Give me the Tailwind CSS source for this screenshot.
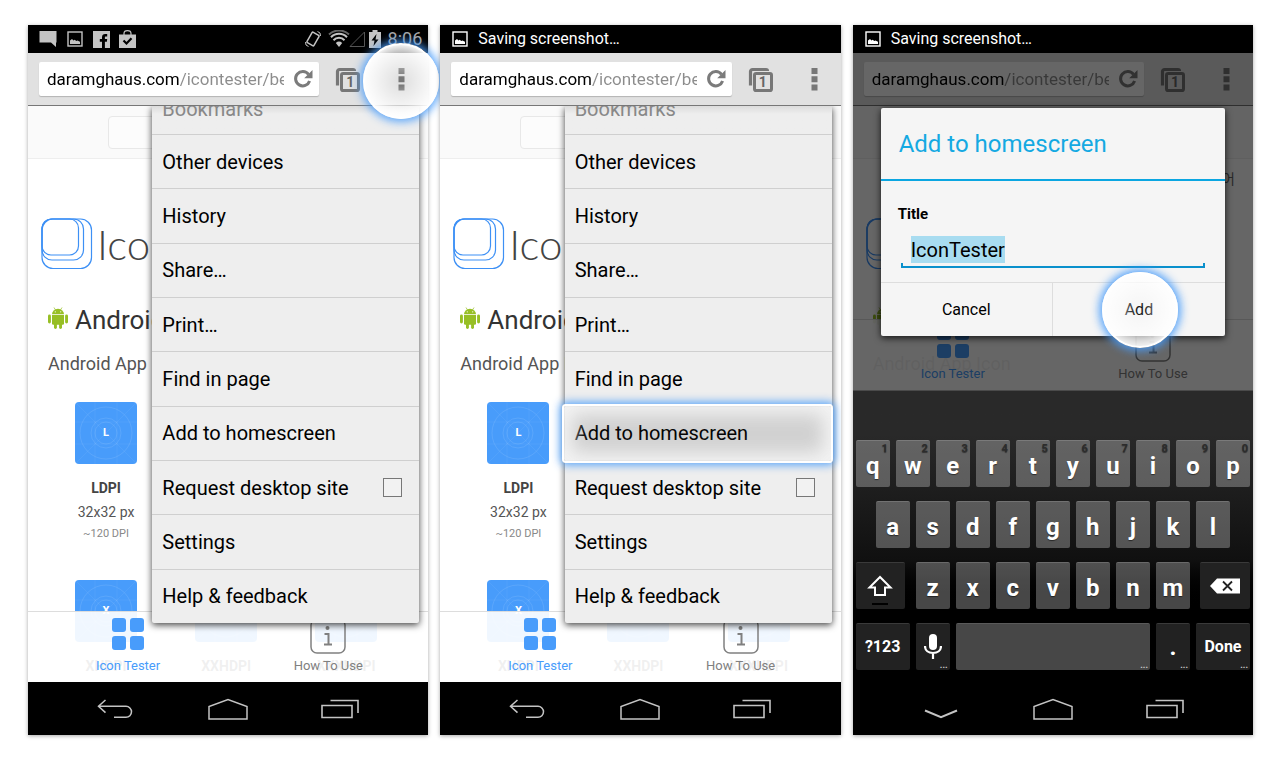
<!DOCTYPE html>
<html lang="en">
<head>
<meta charset="utf-8">
<meta name="viewport" content="width=device-width, initial-scale=1">
<title>Add IconTester to the homescreen</title>
<script src="https://cdn.jsdelivr.net/npm/@tailwindcss/browser@4"></script>
</head>
<body class="bg-white font-['Roboto','Noto_Sans_CJK_KR',sans-serif] text-black">

<svg class="hidden" aria-hidden="true">
  <symbol id="i-picture" viewBox="0 0 16 16"><rect x="1" y="1" width="14" height="14" fill="none" stroke="currentColor" stroke-width="1.4"/><path fill="currentColor" d="M3 13V9.500l2-1.500 1.500 1.500 1.200-.8 1.600 1.300 1.200-.6L13 10.800V13z"/></symbol>
  <symbol id="i-reload" viewBox="0 0 20 20"><path d="M15.500 5.300A7.200 7.200 0 1 0 16.600 12" fill="none" stroke="currentColor" stroke-width="3"/><path d="M19.500 1v8.300h-8.300z" fill="currentColor"/></symbol>
  <symbol id="i-tabs" viewBox="0 0 25 25"><path d="M2.500 18.500V4.500a2 2 0 0 1 2-2H18a1.500 1.500 0 0 1 1.500 1.500" fill="none" stroke="currentColor" stroke-width="3.200"/><rect x="6.500" y="6.500" width="17" height="17" rx="1.600" fill="none" stroke="currentColor" stroke-width="3"/></symbol>
  <symbol id="i-dots" viewBox="0 0 7 24"><path d="M.5 1h6v6h-6zM.5 9.300h6v6h-6zM.5 17.500h6v6h-6z" fill="currentColor"/></symbol>
  <symbol id="i-logo" viewBox="0 0 52 52"><g fill="none" stroke="#3d90f5" stroke-width="1.200"><rect x="1" y="1" width="49.500" height="49.500" rx="11"/><rect x="1" y="1" width="41.500" height="41" rx="10"/><rect x="1" y="1" width="36.500" height="36" rx="9"/></g></symbol>
  <symbol id="i-android" viewBox="0 0 20 22"><g fill="#97bf25"><path d="M4 7.200a6 5.400 0 0 1 12 0z"/><rect x="0" y="7.600" width="2.900" height="8.800" rx="1.450"/><rect x="17.100" y="7.600" width="2.900" height="8.800" rx="1.450"/><path d="M4 8h12v8.500a1.300 1.300 0 0 1-1.300 1.300H5.300A1.300 1.300 0 0 1 4 16.500z"/><rect x="6" y="14" width="2.900" height="8" rx="1.450"/><rect x="11.100" y="14" width="2.900" height="8" rx="1.450"/><path d="M6 .5l1.500 2.500M14 .5l-1.500 2.500" stroke="#97bf25" stroke-width=".7"/></g><circle cx="7.300" cy="4.800" r=".6" fill="#fff"/><circle cx="12.700" cy="4.800" r=".6" fill="#fff"/></symbol>
  <symbol id="i-tile" viewBox="0 0 62 62"><rect width="62" height="62" rx="4" fill="#489cfb"/><g fill="none" stroke="#fff" stroke-opacity=".1"><circle cx="31" cy="31" r="26"/><circle cx="31" cy="31" r="15"/><circle cx="31" cy="31" r="11"/><path stroke-opacity=".05" d="M0 0l62 62M62 0L0 62M20 0v62M42 0v62M0 20h62M0 42h62"/></g></symbol>
  <symbol id="i-grid" viewBox="0 0 32 32"><g fill="currentColor"><rect x="0" y="0" width="14" height="14" rx="3"/><rect x="18" y="0" width="14" height="14" rx="3"/><rect x="0" y="18" width="14" height="14" rx="3"/><rect x="18" y="18" width="14" height="14" rx="3"/></g></symbol>
  <symbol id="i-info" viewBox="0 0 36 36"><rect x="1" y="1" width="34" height="34" rx="6" fill="none" stroke="currentColor" stroke-width="1.500"/><circle cx="17.500" cy="10" r="2" fill="currentColor"/><path d="M14.500 16h4v10M14 26.500h8" fill="none" stroke="currentColor" stroke-width="2"/></symbol>
  <symbol id="i-back" viewBox="0 0 38 20"><path d="M8.500 1L1.500 7.300l7 6.300M2 7.300h27a5.500 5.500 0 0 1 0 11H17" fill="none" stroke="currentColor" stroke-width="1.500"/></symbol>
  <symbol id="i-down" viewBox="0 0 38 20"><path d="M3 11.500l16 6.700 16-6.700" fill="none" stroke="currentColor" stroke-width="2"/></symbol>
  <symbol id="i-home" viewBox="0 0 40 22"><path d="M1 21V8.500L20 1.500l19 7V21z" fill="none" stroke="currentColor" stroke-width="1.500"/></symbol>
  <symbol id="i-recent" viewBox="0 0 38 20"><path d="M1 6.500h30v12H1zM9.500 1.500H37V14" fill="none" stroke="currentColor" stroke-width="1.600"/></symbol>
</svg>

<template id="t-toolbar">
  <div class="flex h-[53px] shrink-0 items-center border-b border-[#777] bg-[#e1e1e1] pr-[23px] pl-[11px] text-[#7b7b7b]">
    <div class="flex h-[34px] flex-1 items-center rounded-xs bg-white pr-[6px] pl-2 shadow-[0_1px_1px_rgba(0,0,0,0.2)]">
      <input type="text" aria-label="Address" value="daramghaus.com/icontester/beta" class="min-w-0 flex-1 bg-linear-to-r from-black from-[132px] to-[#8c8c8c] to-[132px] bg-clip-text text-[17px] leading-6 text-transparent outline-none">
      <button type="button" aria-label="Reload" class="ml-[9px]"><svg class="size-5"><use href="#i-reload"/></svg></button>
    </div>
    <button type="button" aria-label="Tabs" class="relative ml-4 size-[25px] text-[#777]"><svg class="size-[25px]"><use href="#i-tabs"/></svg><span class="absolute inset-0 pt-1 pl-[5px] text-center text-sm leading-[22px] font-bold text-[#666]">1</span></button>
    <button type="button" aria-label="More options" class="ml-[38px] text-[#777]"><svg class="h-6 w-[7px]"><use href="#i-dots"/></svg></button>
  </div>
</template>

<template id="t-page">
  <div class="flex flex-col">
    <div class="h-[53px] border-b border-[#eee] bg-[#fafafa] pt-[10px] pl-20"><div class="h-[33px] w-60 rounded-sm border border-[#e8e8e8] bg-white/40"></div></div>
    <p class="pt-3 pr-[18px] text-right text-sm leading-4 text-[#666]">한국어</p>
    <div class="mt-[31px] flex items-center pl-[13px]">
      <svg class="size-[52px]"><use href="#i-logo"/></svg>
      <span class="pl-1 font-[Lato] text-[42px] leading-[44px] font-light text-[#444]">Icon</span>
    </div>
    <h2 class="mt-[34px] flex h-8 items-center gap-[7px] pl-5 text-[26px] leading-8 text-[#333]"><svg class="mb-1 h-[22px] w-5"><use href="#i-android"/></svg>Android</h2>
    <p class="mt-[14px] pl-5 text-lg leading-7 text-[#555]">Android App Icon</p>
    <div class="mt-6 grid grid-cols-3 gap-y-[36px] pr-[22px] pl-[18px] text-center">
      <div class="flex flex-col items-center"><span class="relative size-[62px]"><svg class="size-[62px]"><use href="#i-tile"/></svg><b class="absolute inset-0 text-[11px] leading-[62px] text-white">L</b></span><b class="mt-3 text-sm leading-6 text-[#444]">LDPI</b><span class="text-sm leading-6 text-[#555]">32x32 px</span><span class="text-[11px] leading-5 text-[#888]">~120 DPI</span></div>
      <div></div><div></div>
      <div class="flex flex-col items-center"><span class="relative size-[62px]"><svg class="size-[62px]"><use href="#i-tile"/></svg><b class="absolute inset-0 text-[11px] leading-[62px] text-white">X</b></span><b class="mt-3 text-sm leading-6 text-[#444]">XHDPI</b></div>
      <div class="flex flex-col items-center"><svg class="size-[62px]"><use href="#i-tile"/></svg><b class="mt-3 text-sm leading-6 text-[#444]">XXHDPI</b></div>
      <div class="flex flex-col items-center"><svg class="size-[62px]"><use href="#i-tile"/></svg><b class="mt-3 text-sm leading-6 text-[#444]">XXXHDPI</b></div>
    </div>
  </div>
  <div class="absolute inset-x-0 bottom-0 grid h-[71px] grid-cols-2 border-t border-[#ddd] bg-white/92 text-[13px] leading-4">
    <a href="#tester" class="flex flex-col items-center justify-end gap-1 pb-2 text-[#489cfb]"><svg class="mb-1 size-8"><use href="#i-grid"/></svg>Icon Tester</a>
    <a href="#how" class="flex flex-col items-center justify-end gap-1 pb-2 text-[#808080]"><svg class="size-9"><use href="#i-info"/></svg>How To Use</a>
  </div>
</template>

<template id="t-menu">
  <div class="absolute top-0 right-[9px] bottom-[59px] flex w-[267px] flex-col divide-y divide-[#cfcfcf] rounded-b-xs bg-[#eee] text-xl shadow-[0_2px_7px_rgba(0,0,0,0.75)]">
    <button type="button" class="flex h-[29px] shrink-0 items-end overflow-hidden bg-linear-to-b from-[#dcdcdc] to-[#eee] to-[8px] px-[10px] leading-[50px] text-[#888]">Bookmarks</button>
    <button type="button" class="flex-1 px-[10px] text-left">Other devices</button>
    <button type="button" class="flex-1 px-[10px] text-left">History</button>
    <button type="button" class="flex-1 px-[10px] text-left">Share…</button>
    <button type="button" class="flex-1 px-[10px] text-left">Print…</button>
    <button type="button" class="flex-1 px-[10px] text-left">Find in page</button>
    <button type="button" class="flex-1 px-[10px] text-left">Add to homescreen</button>
    <label class="flex flex-1 items-center justify-between pr-[17px] pl-[10px]">Request desktop site<input type="checkbox" class="size-[19px] appearance-none border border-[#777] bg-[#f2f2f2]"></label>
    <button type="button" class="flex-1 px-[10px] text-left">Settings</button>
    <button type="button" class="flex-1 px-[10px] text-left">Help &amp; feedback</button>
  </div>
</template>

<template id="t-nav">
  <nav class="flex h-[53px] shrink-0 items-center justify-center bg-black pt-px text-[#c4c4c4]">
    <button type="button" aria-label="Back" class="flex w-28 justify-center"><svg class="h-5 w-[38px]"><use data-back href="#i-back"/></svg></button>
    <button type="button" aria-label="Home" class="flex w-28 justify-center"><svg class="h-[22px] w-10"><use href="#i-home"/></svg></button>
    <button type="button" aria-label="Recent apps" class="flex w-28 justify-center"><svg class="h-5 w-[38px]"><use href="#i-recent"/></svg></button>
  </nav>
</template>

<main class="grid h-screen min-h-[760px] grid-cols-3 grid-rows-1 gap-3 py-[25px] pr-[27px] pl-7">

  <section class="relative flex min-h-0 flex-col shadow-[0_1px_4px_rgba(0,0,0,0.35)]" aria-label="Open the browser menu">
    <div class="flex h-7 shrink-0 items-center bg-black pr-[6px] pl-[11px] text-[#c4c4c4]">
      <svg class="h-[18px] w-[18px]" viewBox="0 0 18 18"><path d="M.5 1h17v11.500H17V17l-5-4.500H.5z" fill="currentColor"/></svg>
      <svg class="ml-[10px] size-4"><use href="#i-picture"/></svg>
      <svg class="ml-[10px] size-[17px]" viewBox="0 0 17 17"><rect width="17" height="17" fill="currentColor"/><path d="M9 17v-6.300H6.800V8H9V6.200C9 4 10.300 3 12.200 3h2v2.500h-1.300c-.8 0-1 .4-1 1V8h2.300l-.3 2.700h-2V17z" fill="#000"/></svg>
      <svg class="ml-2 size-[19px]" viewBox="0 0 19 19"><path d="M1 4.500h17V18H1z" fill="currentColor"/><path d="M6 5V3.500a3.500 2.800 0 0 1 7 0V5" fill="none" stroke="currentColor" stroke-width="1.200"/><path d="M5.500 10.500l3 3 5-5.200" fill="none" stroke="#000" stroke-width="2.200"/></svg>
      <svg class="ml-auto size-[18px]" viewBox="0 0 18 18"><g fill="none" stroke="currentColor"><rect x="5" y="3" width="8" height="12" rx="1" stroke-width="1.500" transform="rotate(30 9 9)"/><path d="M13.500 1.500l2.500 1.500.5 3M4.500 16.500L2 15l-.5-3" stroke-width="1"/></g></svg>
      <svg class="ml-[6px] h-[18px] w-[38px]" viewBox="0 0 38 18"><path d="M1 4.500a14.500 14.500 0 0 1 20 0" fill="none" stroke="#666" stroke-width="2"/><g fill="none" stroke="currentColor" stroke-width="2"><path d="M3 7.300a11 11 0 0 1 16 0M5.500 10.200a7.500 7.500 0 0 1 11 0"/></g><path d="M7.800 13a4.700 4.700 0 0 1 6.400 0L11 17z" fill="currentColor"/><path d="M22 16.500h14.500V2z" fill="none" stroke="#555"/></svg>
      <svg class="ml-[3px] h-[18px] w-3" viewBox="0 0 12 18"><path d="M0 2h3.500V0h5v2H12v16H0z" fill="currentColor"/><path d="M7.500 4L2.500 10.500h3L4.500 16l5-6.500h-3z" fill="#000"/></svg>
      <time class="ml-[7px] text-lg text-[#a8a8a8]">8:06</time>
    </div>
    <div data-part="t-toolbar" class="contents"></div>
    <div class="relative min-h-0 flex-1 overflow-hidden bg-white">
      <div data-part="t-page" class="contents"></div>
      <div data-part="t-menu" class="contents"></div>
    </div>
    <div data-part="t-nav" class="contents"></div>
    <div class="pointer-events-none absolute top-[18px] -right-[11px] size-[76px] rounded-full border-2 border-white bg-[radial-gradient(circle_closest-side,rgba(255,255,255,0)_10%,rgba(255,255,255,0.7)_75%,rgba(255,255,255,0.95)_100%)] shadow-[0_0_8px_3px_rgba(72,156,251,0.85)]"></div>
  </section>

  <section class="relative flex min-h-0 flex-col shadow-[0_1px_4px_rgba(0,0,0,0.35)]" aria-label="Choose Add to homescreen">
    <div class="flex h-7 shrink-0 items-center bg-black pl-3 text-base text-white"><svg class="size-4"><use href="#i-picture"/></svg><span class="ml-[10px]">Saving screenshot…</span></div>
    <div data-part="t-toolbar" class="contents"></div>
    <div class="relative min-h-0 flex-1 overflow-hidden bg-white">
      <div data-part="t-page" class="contents"></div>
      <div data-part="t-menu" class="contents"></div>
      <div class="pointer-events-none absolute top-[298px] right-2 h-[59px] w-[271px] rounded-sm border-2 border-white bg-black/12 shadow-[0_0_8px_2px_rgba(72,156,251,0.9),inset_0_0_18px_8px_rgba(245,245,245,0.95)]"></div>
    </div>
    <div data-part="t-nav" class="contents"></div>
  </section>

  <section class="relative flex min-h-0 flex-col shadow-[0_1px_4px_rgba(0,0,0,0.35)]" aria-label="Confirm the title">
    <div class="flex h-7 shrink-0 items-center bg-black pl-3 text-base text-white"><svg class="size-4"><use href="#i-picture"/></svg><span class="ml-[10px]">Saving screenshot…</span></div>
    <div class="relative flex min-h-0 flex-1 flex-col">
      <div data-part="t-toolbar" class="contents"></div>
      <div class="relative min-h-0 flex-1 overflow-hidden bg-white"><div data-part="t-page" class="contents"></div></div>
      <div class="absolute inset-0 bg-black/60"></div>
      <form role="dialog" aria-label="Add to homescreen" class="absolute inset-x-7 top-[55px] rounded-xs bg-[#f5f5f5] shadow-[0_2px_7px_rgba(0,0,0,0.8)]">
        <h1 class="border-b-2 border-[#0ba6e1] px-[18px] pt-5 pb-[19px] text-2xl leading-8 text-[#14a9e2]">Add to homescreen</h1>
        <div class="px-[17px] pt-[21px] pb-[14px]">
          <label for="title" class="block text-[15px] leading-6 font-bold">Title</label>
          <div class="mx-[3px] mt-[10px] flex flex-col">
            <div class="flex pl-[10px]"><input id="title" type="text" value="IconTester" class="field-sizing-content h-[27px] bg-[#a8dcf0] text-xl outline-none"></div>
            <div class="h-[5px] border-x-2 border-b-2 border-[#0a90cc]"></div>
          </div>
        </div>
        <div class="grid h-[54px] grid-cols-2 divide-x divide-[#ddd] border-t border-[#ddd] text-base">
          <button type="button">Cancel</button>
          <button type="submit">Add</button>
        </div>
        <div class="pointer-events-none absolute right-[47px] -bottom-3 size-[76px] rounded-full border-2 border-white bg-[radial-gradient(circle_closest-side,rgba(255,255,255,0.1)_10%,rgba(255,255,255,0.75)_80%,rgba(255,255,255,0.9)_100%)] shadow-[0_0_8px_3px_rgba(72,156,251,0.9)]"></div>
      </form>
    </div>
    <div id="keyboard" class="flex shrink-0 flex-col gap-[14px] border-t border-[#4a4a4a] bg-linear-to-b from-[#292929] from-[15%] via-[#101010] via-[58%] to-black to-[76%] px-[3px] pt-[49px] pb-3 text-2xl font-bold text-white">
      <div class="flex gap-[6px]" data-keys="qwertyuiop"></div>
      <div class="flex gap-[6px] px-5" data-keys="asdfghjkl"></div>
      <div class="flex">
        <button type="button" aria-label="Shift" class="mr-[11px] flex h-[47px] w-[49px] items-center justify-center rounded-xs border-t border-[#3a3a3a] bg-[#222]"><svg class="mt-2 h-8 w-7" viewBox="0 0 28 32"><path d="M14 3L3.500 13.500H9V21h10v-7.500h5.500z" fill="none" stroke="#fff" stroke-width="2"/><path d="M6 30h16" stroke="#000" stroke-width="2"/></svg></button>
        <div class="flex flex-1 gap-[6px]" data-keys="zxcvbnm"></div>
        <button type="button" aria-label="Delete" class="ml-[10px] flex h-[47px] w-[50px] items-center justify-center rounded-xs border-t border-[#3a3a3a] bg-[#222]"><svg class="h-4 w-[30px]" viewBox="0 0 30 16"><path d="M0 8l7-7.500h23v15H7z" fill="#fff"/><path d="M13 3.500l9 9M22 3.500l-9 9" stroke="#222" stroke-width="1.800"/></svg></button>
      </div>
      <div class="flex gap-[6px]">
        <button type="button" class="h-[47px] w-[54px] rounded-xs border-t border-[#3a3a3a] bg-[#222] text-base">?123</button>
        <button type="button" aria-label="Voice input" class="relative flex h-[47px] w-[34px] items-center justify-center rounded-xs border-t border-[#3a3a3a] bg-[#222]"><svg class="h-[26px] w-[18px]" viewBox="0 0 18 26"><rect x="5" y="0" width="8" height="16" rx="4" fill="#fff"/><path d="M1 12c0 4.500 3.500 7 8 7s8-2.500 8-7M9 19v6" fill="none" stroke="#fff" stroke-width="2.200"/></svg><span class="absolute right-[2px] bottom-[2px] text-[9px] leading-[6px] text-[#ccc]">...</span></button>
        <button type="button" aria-label="Space" class="relative h-[47px] flex-1 rounded-xs border-t border-[#5a5a5a] bg-[#474747]"><span class="absolute right-[2px] bottom-[2px] text-[9px] leading-[6px] text-[#ccc]">...</span></button>
        <button type="button" class="relative h-[47px] w-[34px] rounded-xs border-t border-[#3a3a3a] bg-[#222]">.<span class="absolute right-[2px] bottom-[2px] text-[9px] leading-[6px] text-[#ccc]">...</span></button>
        <button type="button" class="relative h-[47px] w-[54px] rounded-xs border-t border-[#3a3a3a] bg-[#222] text-base">Done<span class="absolute right-[2px] bottom-[2px] text-[9px] leading-[6px] text-[#ccc]">...</span></button>
      </div>
    </div>
    <div data-part="t-nav" data-back-icon="#i-down" class="contents"></div>
  </section>
</main>

<script>
  document.querySelectorAll('[data-part]').forEach(slot => {
    slot.append(document.getElementById(slot.dataset.part).content.cloneNode(true));
    if (slot.dataset.backIcon) slot.querySelector('[data-back]').setAttribute('href', slot.dataset.backIcon);
  });
  document.querySelectorAll('[data-keys]').forEach(row => {
    [...row.dataset.keys].forEach((letter, i) => {
      const digit = row.dataset.keys.length === 10 ? `<span class="absolute top-[2px] right-[2px] text-[11px] leading-3 text-[#2c2c2c]">${(i + 1) % 10}</span>` : '';
      row.insertAdjacentHTML('beforeend', `<button type="button" class="relative h-[47px] min-w-0 flex-1 rounded-xs border-t border-white/15 bg-white/28 pt-1 leading-8 [text-shadow:0_1px_1px_#0008]">${letter}${digit}</button>`);
    });
  });
</script>
</body>
</html>
